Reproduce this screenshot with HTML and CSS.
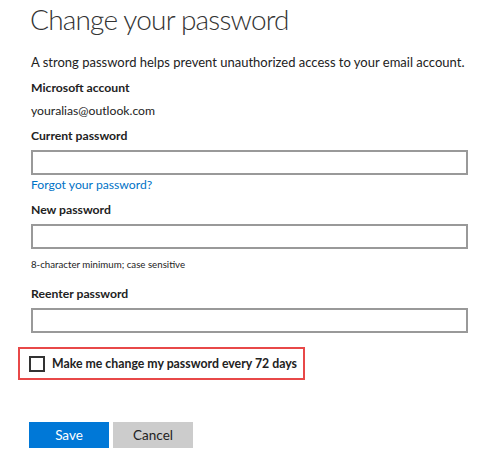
FILE: index.html
```html
<!DOCTYPE html>
<html lang="en">
<head>
<meta charset="utf-8">
<title>Change your password</title>
<link rel="stylesheet" href="styles.css">
</head>
<body>
<div class="page">
  <h1 class="title">Change your password</h1>
  <p class="desc">A strong password helps prevent unauthorized access to your email account.</p>
  <div class="label">Microsoft account</div>
  <div class="value">youralias@outlook.com</div>
  <div class="label field-label">Current password</div>
  <input class="field" type="password">
  <a class="link" href="#">Forgot your password?</a>
  <div class="label field-label">New password</div>
  <input class="field" type="password">
  <div class="hint">8-character minimum; case sensitive</div>
  <div class="label field-label reenter">Reenter password</div>
  <input class="field" type="password">
  <label class="check-row">
    <span class="checkbox"></span>
    <span class="check-text">Make me change my password every 72 days</span>
  </label>
  <div class="actions">
    <button class="btn btn-primary">Save</button>
    <button class="btn btn-secondary">Cancel</button>
  </div>
</div>
</body>
</html>
```

FILE: styles.css
```css
html, body {
  margin: 0;
  padding: 0;
  background: #ffffff;
}
body {
  font-family: Lato, "Open Sans", "Liberation Sans", sans-serif;
  color: #222222;
  white-space: nowrap;
}
.page {
  width: 437px;
  padding-left: 31px;
  display: flex;
  flex-direction: column;
  align-items: flex-start;
}
.title {
  margin: -1px 0 0 -1px;
  font-size: 28px;
  letter-spacing: -0.8px;
  line-height: 40px;
  font-weight: 300;
  color: #333333;
}
.desc {
  margin: 13px 0 0 0;
  font-size: 13px;
  line-height: 20px;
  color: #222222;
}
.label {
  font-size: 12.2px;
  line-height: 20px;
  font-weight: 700;
  color: #222222;
  margin-top: 6px;
}
.value {
  font-size: 12.2px;
  line-height: 20px;
  margin-top: 3px;
}
.field-label {
  margin-top: 5px;
  margin-bottom: 4px;
}
.field {
  box-sizing: border-box;
  width: 437px;
  height: 25px;
  margin: 0;
  border: 2px solid #999999;
  background: #ffffff;
  padding: 0 6px;
  font: inherit;
}
.link {
  font-size: 12.2px;
  line-height: 20px;
  color: #0072c6;
  text-decoration: none;
}
.hint {
  font-size: 9.7px;
  line-height: 16px;
  margin-top: 7px;
}
.reenter {
  margin-top: 12px;
}
.check-row {
  box-sizing: border-box;
  margin: 14px 0 0 -13px;
  height: 33px;
  width: 287px;
  border: 2px solid #e84848;
  display: flex;
  align-items: center;
  padding-left: 9px;
  gap: 7px;
}
.checkbox {
  box-sizing: border-box;
  width: 16px;
  height: 16px;
  border: 2px solid #333333;
  background: #ffffff;
  flex: none;
}
.check-text {
  font-size: 12.3px;
  font-weight: 700;
  color: #222222;
  line-height: 20px;
}
.actions {
  display: flex;
  gap: 4px;
  margin: 42px 0 0 -2px;
}
.btn {
  width: 80px;
  height: 26px;
  border: none;
  font-family: inherit;
  font-size: 13.5px;
  padding: 0;
}
.btn-primary {
  background: #0078d7;
  color: #ffffff;
}
.btn-secondary {
  background: #cccccc;
  color: #222222;
}
```
